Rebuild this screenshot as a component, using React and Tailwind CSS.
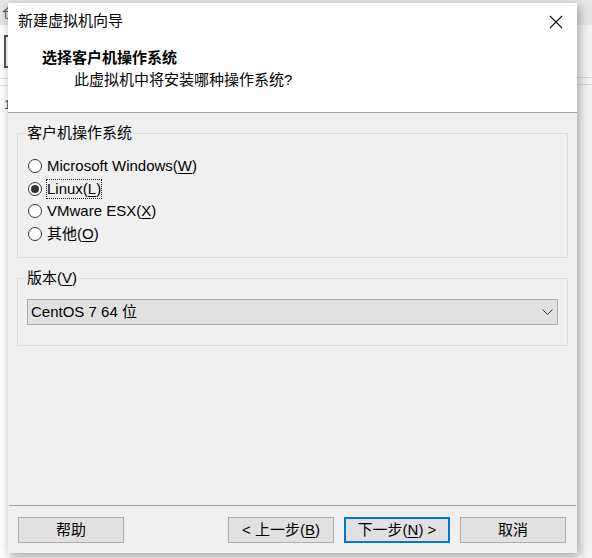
import React from "react";

const font = { fontFamily: '"Liberation Sans", "Noto Sans CJK SC", sans-serif' };

function Radio({ checked, children, focus }) {
  return (
    <div className="flex h-[22.5px] items-center">
      <div className="ml-[10px] flex h-[14px] w-[14px] items-center justify-center rounded-full border border-[#333333] bg-white">
        {checked && <div className="h-[8px] w-[8px] rounded-full bg-[#333333]" />}
      </div>
      <div
        className={
          "ml-[4px] flex h-[20px] items-center px-[1px] leading-[20px] " +
          (focus ? "outline outline-1 outline-dotted outline-[#222] -outline-offset-1" : "")
        }
      >
        {children}
      </div>
    </div>
  );
}

function U({ children }) {
  return <span className="underline underline-offset-[2px] decoration-1">{children}</span>;
}

function Btn({ children, primary }) {
  return (
    <div
      className={
        "flex h-[26px] w-[106px] items-center justify-center bg-[#e1e1e1] text-[15px] text-black " +
        (primary ? "border-2 border-[#0078d7]" : "border border-[#adadad]")
      }
    >
      {children}
    </div>
  );
}

export default function App() {
  return (
    <div className="relative h-[558px] w-[592px] overflow-hidden bg-[#f4f4f4] text-black" style={font}>
      {/* background window */}
      <div className="flex h-[25px] w-full items-center bg-[#e6e6e6]">
        <span className="ml-[2px] text-[13px] text-[#555]">仓</span>
      </div>
      <div className="absolute left-0 top-[25px] h-[533px] w-[10px] bg-white">
        <div className="ml-[4px] mt-[10px] h-[33px] w-[4px] border-y-2 border-l-2 border-[#555]" />
        <div className="mt-[10px] h-px w-full bg-[#dadada]" />
        <div className="mt-[6px] h-px w-full bg-[#e4e4e4]" />
        <div className="ml-[4px] mt-[10px] text-[12px] text-[#555]">1</div>
      </div>
      <div className="absolute right-0 top-[77px] h-px w-[15px] bg-[#d6d6d6]" />
      <div className="absolute right-0 top-[84px] h-px w-[15px] bg-[#d6d6d6]" />

      {/* dialog */}
      <div className="absolute left-[8px] top-[3px] flex h-[550px] w-[569px] flex-col bg-[#f0f0f0] shadow-[2px_3px_10px_rgba(0,0,0,0.35)]">
        <div className="flex h-[109px] flex-col bg-white">
          <div className="flex h-[36px] items-center justify-between">
            <div className="ml-[10px] text-[15px] leading-[20px]">新建虚拟机向导</div>
            <svg width="14" height="14" viewBox="0 0 14 14" className="mr-[14px] mt-[1px]">
              <path d="M1 1 L13 13 M13 1 L1 13" stroke="#111" strokeWidth="1.1" fill="none" />
            </svg>
          </div>
          <div className="ml-[34px] mt-[9px] text-[15px] font-bold leading-[20px]">选择客户机操作系统</div>
          <div className="ml-[66px] mt-[2px] text-[15px] leading-[20px]">此虚拟机中将安装哪种操作系统?</div>
        </div>
        <div className="h-px bg-[#a0a0a0]" />

        <div className="flex flex-1 flex-col px-[9px]">
          {/* group 1 */}
          <div className="mt-[20px] border border-[#dcdcdc] pb-[12px]">
            <div className="-mt-[11px] ml-[8px] w-fit bg-[#f0f0f0] px-[1px] text-[15px] leading-[20px]">
              客户机操作系统
            </div>
            <div className="mt-[12px] flex flex-col text-[15px]">
              <Radio>
                Microsoft Windows(<U>W</U>)
              </Radio>
              <Radio checked focus>
                Linux(<U>L</U>)
              </Radio>
              <Radio>
                VMware ESX(<U>X</U>)
              </Radio>
              <Radio>
                其他(<U>O</U>)
              </Radio>
            </div>
          </div>

          {/* group 2 */}
          <div className="mt-[20px] border border-[#dcdcdc] pb-[20px]">
            <div className="-mt-[11px] ml-[8px] w-fit bg-[#f0f0f0] px-[1px] text-[15px] leading-[20px]">
              版本(<U>V</U>)
            </div>
            <div className="mx-[9px] mt-[11px] flex h-[26px] items-center justify-between border border-[#adadad] bg-[#e1e1e1]">
              <span className="ml-[3px] text-[15px] leading-[20px]">CentOS 7 64 位</span>
              <svg width="11" height="7" viewBox="0 0 11 7" className="mr-[4px]">
                <path d="M0.5 0.5 L5.5 5.5 L10.5 0.5" stroke="#333" strokeWidth="1" fill="none" />
              </svg>
            </div>
          </div>

          <div className="flex-1" />
        </div>

        <div className="mx-[1px] h-px bg-[#a0a0a0]" />
        <div className="flex h-[47px] items-start pl-[10px] pt-[11px]">
          <Btn>帮助</Btn>
          <div className="ml-[104px]">
            <Btn>
              &lt; 上一步(<U>B</U>)
            </Btn>
          </div>
          <div className="ml-[10px]">
            <Btn primary>
              下一步(<U>N</U>) &gt;
            </Btn>
          </div>
          <div className="ml-[10px]">
            <Btn>取消</Btn>
          </div>
        </div>
      </div>
    </div>
  );
}
